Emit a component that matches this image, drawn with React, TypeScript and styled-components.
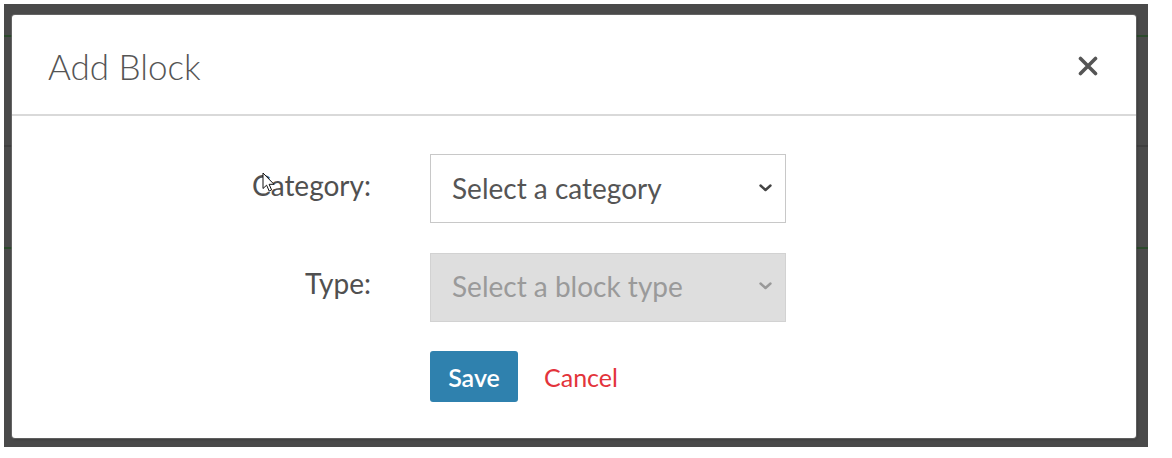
import React from "react";
import styled, { createGlobalStyle } from "styled-components";

const GlobalStyle = createGlobalStyle`
  html, body {
    margin: 0;
    padding: 0;
    background: #ffffff;
  }
  body {
    font-family: "Lato", "Liberation Sans", sans-serif;
  }
`;

const App = () => {
  return (
    <>
      <GlobalStyle />
      <Screen>
        <Backdrop>
          <PageBehind>
            <PageLine $top={31} $color="#2c4a2c" />
            <PageLine $top={141} $color="#3f3f3f" />
            <PageLine $top={243} $color="#2c4a2c" />
          </PageBehind>
          <Modal>
            <Header>
              <Title>Add Block</Title>
              <CloseButton aria-label="Close">
                <svg width="20" height="20" viewBox="0 0 20 20">
                  <path d="M2.5 2.5 L17.5 17.5 M17.5 2.5 L2.5 17.5" stroke="#555" strokeWidth="3.6" strokeLinecap="round" />
                </svg>
              </CloseButton>
            </Header>
            <Body>
              <FormRow>
                <Label>Category:</Label>
                <SelectBox>
                  <span>Select a category</span>
                  <Chevron color="#444" />
                </SelectBox>
              </FormRow>
              <FormRow>
                <Label>Type:</Label>
                <SelectBox $disabled>
                  <span>Select a block type</span>
                  <Chevron color="#999" />
                </SelectBox>
              </FormRow>
              <FormRow>
                <span />
                <Actions>
                  <SaveButton>Save</SaveButton>
                  <CancelLink>Cancel</CancelLink>
                </Actions>
              </FormRow>
              <Cursor width="14" height="21" viewBox="0 0 14 21">
                <path d="M1 1 L1 16.5 L4.6 13.2 L7.2 19 L9.6 17.9 L7.1 12.3 L12 12.3 Z" fill="#fff" stroke="#111" strokeWidth="1" strokeLinejoin="round" />
              </Cursor>
            </Body>
          </Modal>
        </Backdrop>
      </Screen>
    </>
  );
};

const Chevron = ({ color }: { color: string }) => (
  <svg width="13" height="8" viewBox="0 0 13 8">
    <path d="M1.5 1.5 L6.5 6 L11.5 1.5" fill="none" stroke={color} strokeWidth="2.4" strokeLinecap="round" strokeLinejoin="round" />
  </svg>
);

const Screen = styled.div`
  width: 1172px;
  height: 458px;
  padding: 4px 24px 11px 4px;
  box-sizing: border-box;
`;

const Backdrop = styled.div`
  position: relative;
  height: 100%;
  background: #4a4a4a;
  padding: 11px 12px 9px 8px;
  box-sizing: border-box;
`;

const PageBehind = styled.div`
  position: absolute;
  inset: 0;
  pointer-events: none;
`;

const PageLine = styled.div<{ $top: number; $color: string }>`
  position: absolute;
  left: 0;
  right: 0;
  top: ${(p) => p.$top}px;
  height: 2px;
  background: ${(p) => p.$color};
`;

const Modal = styled.div`
  position: relative;
  height: 100%;
  background: #ffffff;
  border-radius: 3px;
  box-shadow: 0 0 0 1px rgba(120, 120, 120, 0.6), 1px 1px 3px rgba(0, 0, 0, 0.35);
  display: flex;
  flex-direction: column;
`;

const Header = styled.div`
  height: 101px;
  box-sizing: border-box;
  display: flex;
  align-items: center;
  justify-content: space-between;
  padding: 0 38px 0 36px;
  border-bottom: 2px solid #d9d9d9;
`;

const Title = styled.h4`
  margin: 0;
  font-family: "Lato", sans-serif;
  font-weight: 300;
  font-size: 35px;
  color: #555555;
  margin-top: 2px;
`;

const CloseButton = styled.button`
  border: none;
  background: none;
  padding: 0;
  width: 20px;
  height: 20px;
  display: flex;
  cursor: pointer;
  margin-top: 2px;
`;

const Body = styled.div`
  position: relative;
  padding: 38px 0 0 0;
  display: flex;
  flex-direction: column;
  gap: 29.5px;
`;

const FormRow = styled.div`
  display: grid;
  grid-template-columns: 359px 356px;
  column-gap: 59px;
  align-items: center;
`;

const Label = styled.label`
  text-align: right;
  font-size: 28px;
  line-height: 1;
  color: #505050;
  margin-top: -8px;
`;

const SelectBox = styled.div<{ $disabled?: boolean }>`
  height: 69px;
  box-sizing: border-box;
  display: flex;
  align-items: center;
  justify-content: space-between;
  padding: 0 13px 2px 21px;
  border: 1px solid ${(p) => (p.$disabled ? "#d2d2d2" : "#c8c8c8")};
  background: ${(p) => (p.$disabled ? "#dedede" : "#ffffff")};
  color: ${(p) => (p.$disabled ? "#9a9a9a" : "#555555")};
  font-size: 28px;

  span {
    line-height: 1;
  }
`;

const Actions = styled.div`
  display: flex;
  align-items: center;
  gap: 26px;
`;

const SaveButton = styled.button`
  height: 51px;
  width: 88px;
  border: none;
  border-radius: 3px;
  background: #2f81ae;
  color: #ffffff;
  font-family: "Lato", sans-serif;
  font-weight: 600;
  font-size: 25px;
  padding: 0;
  cursor: pointer;
`;

const CancelLink = styled.a`
  color: #e3343b;
  font-size: 25px;
  cursor: pointer;
`;

const Cursor = styled.svg`
  position: absolute;
  left: 250px;
  top: 56px;
`;

export default App;
